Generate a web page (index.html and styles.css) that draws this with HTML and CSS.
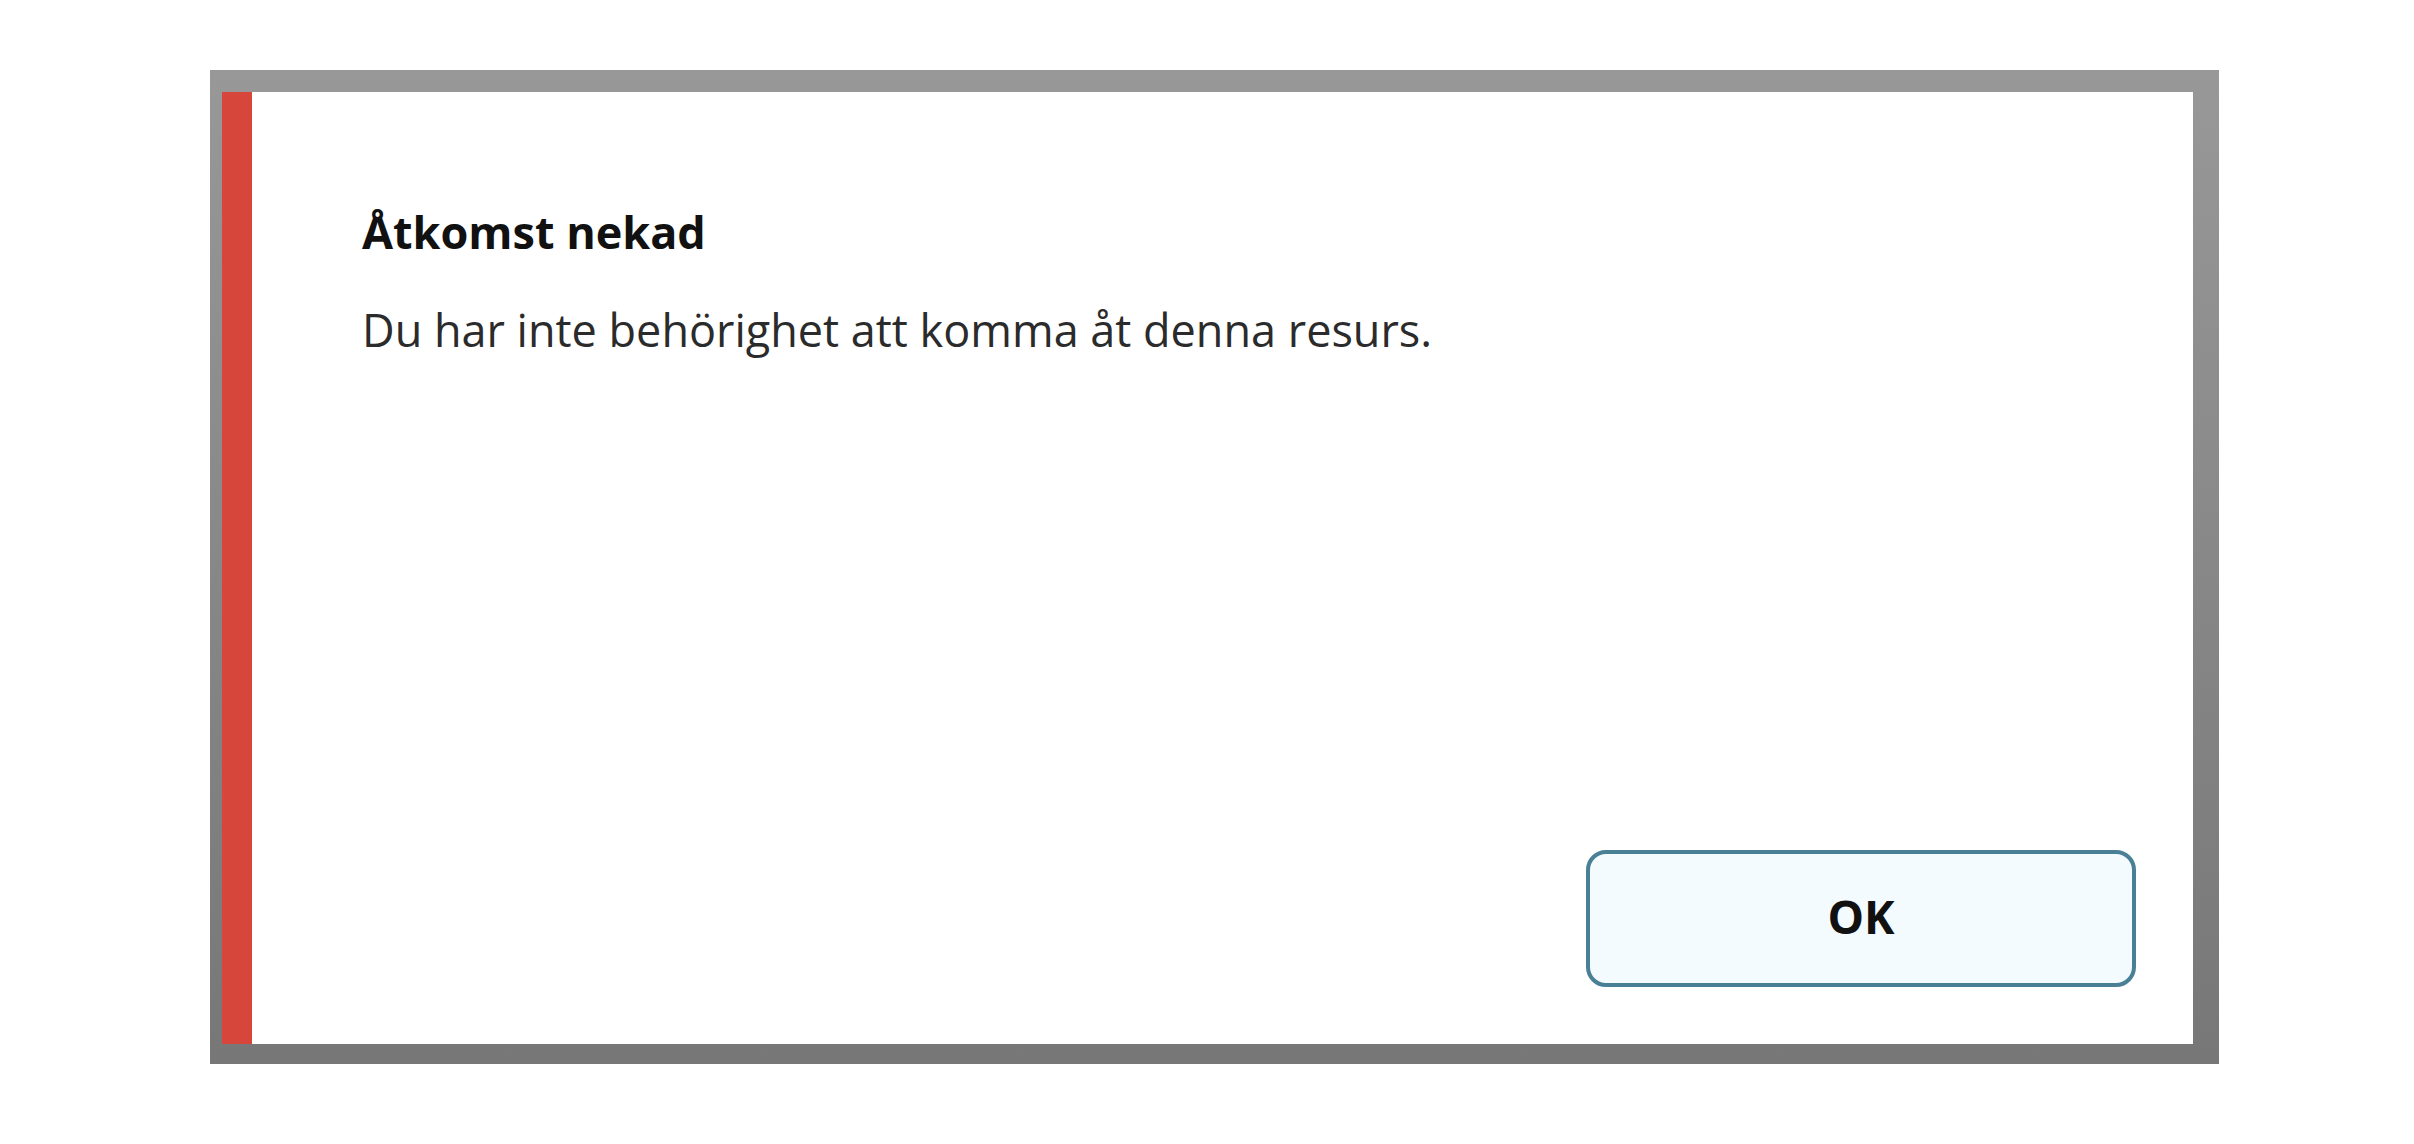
FILE: index.html
```html
<!DOCTYPE html>
<html lang="sv">
<head>
  <meta charset="UTF-8">
  <title>Åtkomst nekad</title>
  <link rel="stylesheet" href="styles.css">
</head>
<body>

  <div class="backdrop">
    <div class="dialog">
      <h2 class="dialog-title">Åtkomst nekad</h2>
      <p class="dialog-text">Du har inte behörighet att komma åt denna resurs.</p>
      <button class="ok-button">OK</button>
    </div>
  </div>

</body>
</html>
```

FILE: styles.css
```css
body {
  margin: 0;
  background: #ffffff;
  font-family: "Open Sans", "Noto Sans", sans-serif;
}
.backdrop {
  width: 2009px;
  height: 994px;
  box-sizing: border-box;
  margin: 70px 0 0 210px;
  padding: 22px 26px 20px 12px;
  background: linear-gradient(to bottom, #989898, #777777);
  display: flex;
}
.dialog {
  flex: 1;
  display: flex;
  flex-direction: column;
  background: #ffffff;
  border-left: 30px solid #d6463a;
  padding: 113px 57px 57px 110px;
}
.dialog-title {
  margin: 0;
  font-size: 45px;
  line-height: 54px;
  font-weight: 700;
  color: #111111;
}
.dialog-text {
  margin: 44px 0 0;
  font-size: 45px;
  line-height: 54px;
  color: #2b2b2b;
}
.ok-button {
  margin-top: auto;
  align-self: flex-end;
  width: 550px;
  height: 137px;
  box-sizing: border-box;
  padding: 0 0 6px;
  border: 4px solid #4a8096;
  border-radius: 20px;
  background: #f3fbfe;
  font-family: inherit;
  font-size: 46px;
  font-weight: 700;
  color: #111111;
}
```
